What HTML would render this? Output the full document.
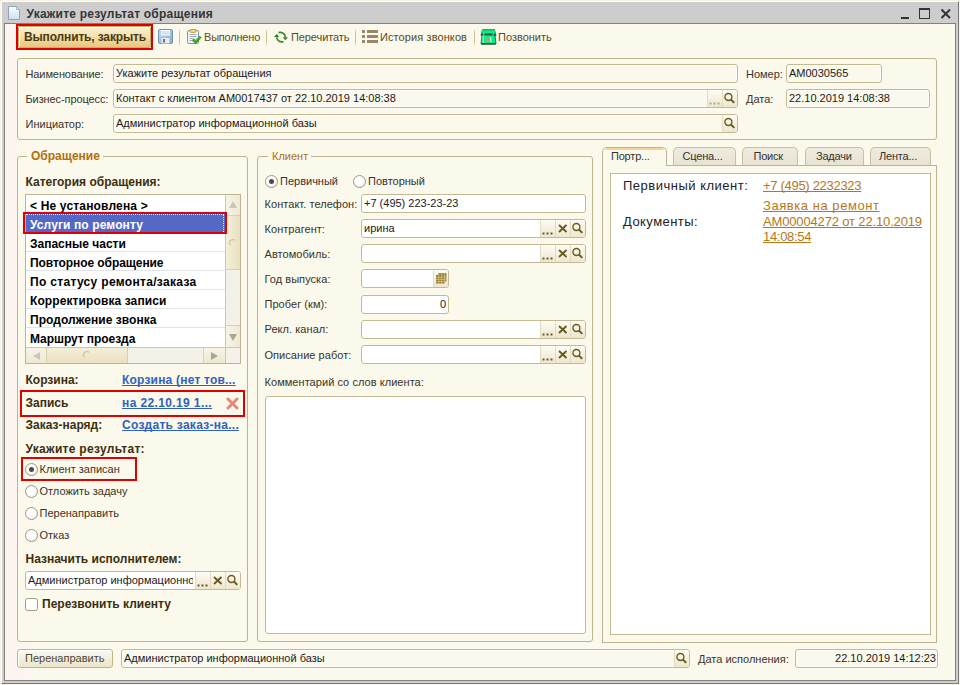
<!DOCTYPE html><html><head><meta charset="utf-8"><style>
*{margin:0;padding:0;box-sizing:border-box}
html,body{width:960px;height:685px;overflow:hidden;background:#f6f3e2;font-family:"Liberation Sans",sans-serif;}
.a{position:absolute;text-decoration-skip-ink:none}
.t11{font-size:11px;line-height:13px;color:#2b2b2b;white-space:nowrap}
.b12{font-size:12px;line-height:14px;font-weight:bold;color:#3a2f10;white-space:nowrap}
.b11{font-size:11px;line-height:13px;font-weight:bold;color:#222;white-space:nowrap}
.t13{font-size:13px;line-height:15px;color:#222;white-space:nowrap}
.tt{font-size:11px;line-height:13px;color:#5a4a20;white-space:nowrap}
.grp{border:1px solid #bdb591;border-radius:3px;}
.gtitle{height:14px;background:#fbf9ec;font-size:11px;line-height:14px;color:#b0700e;padding-left:4px;white-space:nowrap}
.gb{font-weight:bold}
.fld{border:1px solid #c3ba94;border-radius:3px;background:#fff;overflow:hidden}
.fld.ro{background:#fbf9ec;box-shadow:inset 1px 1px 0 #fff, inset -1px -1px 0 #fff}
.ft{position:absolute;top:2px;font-size:11px;line-height:13px;color:#1a1a1a;white-space:nowrap;overflow:hidden}
.fb{position:absolute;top:0;width:16px;height:17px;border-left:1px solid #e2dbc0;background:linear-gradient(#fdfcf5,#ede7cf)}
.ic{position:absolute;left:0;top:0}
.sep{position:absolute;width:1px;background:linear-gradient(#fbf9ec,#c9bd92 30%,#c9bd92 70%,#fbf9ec)}
.lnk{color:#2f62c0;text-decoration:underline}
.rb{position:absolute;width:13px;height:13px;border-radius:50%;border:1px solid #9c987e;background:radial-gradient(circle at 40% 40%,#fff 40%,#e9e7df)}
.rd{position:absolute;left:3px;top:3px;width:5px;height:5px;border-radius:50%;background:#4a4a55}
.red{border:2px solid #e00000}
</style></head><body>
<div class="a " style="left:1px;top:1px;width:958px;height:683px;background:#cdcdcd;border-top:1px solid #fff;border-left:1px solid #fff;border-right:1px solid #7a7a7a;border-bottom:1px solid #7a7a7a;"></div>
<div class="a " style="left:4px;top:23px;width:952px;height:658px;background:#fbf9ec;border:1px solid #808080;"></div>
<div class="a " style="left:5px;top:24px;width:12px;height:656px;background:#fdf5ef;"></div>
<div class="a " style="left:17px;top:642px;width:14px;height:38px;background:#fdf5ef;"></div>
<svg class="a" style="left:7px;top:5px" width="14" height="16"><defs><linearGradient id="dg" x1="0" y1="0" x2="0" y2="1"><stop offset="0" stop-color="#fafcff"/><stop offset="1" stop-color="#cfe0f2"/></linearGradient></defs><path d="M1.5 1.5 H9.5 L12.5 4.5 V14.5 H1.5 Z" fill="url(#dg)" stroke="#8fa3bb" stroke-width="1"/><path d="M9.5 1.5 V4.5 H12.5" fill="#d8e6f3" stroke="#9fb3c9" stroke-width="1"/></svg>
<div class="a b12" style="left:26.5px;top:7px;color:#353535;letter-spacing:0.22px;">Укажите результат обращения</div>
<div class="a " style="left:901px;top:17px;width:8px;height:2px;background:#333;"></div>
<div class="a " style="left:919px;top:8px;width:11px;height:11px;border:1px solid #333;border-top:2px solid #333;"></div>
<svg class="a" style="left:940px;top:8px" width="12" height="12"><path d="M1.5 1.5 L10 10 M10 1.5 L1.5 10" stroke="#333" stroke-width="2"/></svg>
<div class="a red" style="left:16px;top:24px;width:137px;height:26px;"></div>
<div class="a " style="left:18px;top:26px;width:133px;height:22px;border:1px solid #c9ae6a;border-radius:2px;background:linear-gradient(#fbf3d8,#f1dca4 55%,#e6c77e);box-shadow:inset 1px 1px 0 #fffbea;"></div>
<div class="a b12" style="left:24px;top:30px;color:#4b3a10;letter-spacing:-0.15px;">Выполнить, закрыть</div>
<svg class="a" style="left:158px;top:29px" width="16" height="16"><defs><linearGradient id="sg" x1="0" y1="0" x2="1" y2="1"><stop offset="0" stop-color="#c2dcf2"/><stop offset="1" stop-color="#86aad0"/></linearGradient></defs><rect x="0.5" y="0.5" width="14" height="14" rx="1.5" fill="url(#sg)" stroke="#7592b2"/><rect x="3" y="1" width="9" height="5.5" fill="#f6fafd"/><rect x="3.5" y="2.5" width="8" height="0.9" fill="#b6d0e6"/><rect x="3.5" y="4.3" width="8" height="0.9" fill="#b6d0e6"/><rect x="3.5" y="9" width="8" height="5.5" fill="#e9ecef"/><rect x="5" y="10" width="2" height="3.5" fill="#5f7892"/></svg>
<div class="sep" style="left:179px;top:28px;height:19px"></div>
<svg class="a" style="left:187px;top:29px" width="16" height="16"><rect x="0.5" y="1.5" width="11" height="13" rx="1.5" fill="#f3f6f9" stroke="#8592a0"/><rect x="3" y="0.5" width="6" height="2.8" rx="1" fill="#f7e08a" stroke="#c4952e"/><path d="M2.5 5.5 H9.5 M2.5 7.5 H9.5 M2.5 9.5 H5.5 M2.5 11.5 H5" stroke="#9aa6b2" stroke-width="0.9"/><path d="M5.8 10.2 L8.6 13 L13.6 7.6" fill="none" stroke="#2e9a22" stroke-width="2.8" stroke-linejoin="round"/><path d="M6.4 10.2 L8.6 12.2 L13 7.6" fill="none" stroke="#6cc84a" stroke-width="1"/></svg>
<div class="a tt" style="left:204px;top:31px;letter-spacing:-0.2px;">Выполнено</div>
<div class="sep" style="left:266px;top:28px;height:19px"></div>
<svg class="a" style="left:273px;top:30px" width="16" height="14"><path d="M5.5 2.6 C9 1.8 12 3.5 12.3 7" fill="none" stroke="#3c8a2c" stroke-width="1.7"/><path d="M9.7 7.2 H15 L12.3 10.2 Z" fill="#2f7e22"/><path d="M10.5 11.6 C7 12.4 4 10.8 3.7 7.3" fill="none" stroke="#3c8a2c" stroke-width="1.7"/><path d="M1 7 H6.3 L3.7 4 Z" fill="#2f7e22"/></svg>
<div class="a tt" style="left:291px;top:31px;letter-spacing:-0.1px;">Перечитать</div>
<div class="sep" style="left:355px;top:28px;height:19px"></div>
<svg class="a" style="left:362px;top:30px" width="17" height="14"><g fill="#9c8668"><rect x="0" y="0" width="3" height="3"/><rect x="5" y="0" width="11" height="3"/><rect x="0" y="5" width="3" height="3"/><rect x="5" y="5" width="11" height="3"/><rect x="0" y="10" width="3" height="3"/><rect x="5" y="10" width="11" height="3"/></g></svg>
<div class="a tt" style="left:380px;top:31px;letter-spacing:0.1px;">История звонков</div>
<div class="sep" style="left:474px;top:28px;height:19px"></div>
<svg class="a" style="left:480px;top:29px" width="17" height="16"><path d="M2.5 0.5 H14.5 L15.5 4 H1.5 Z" fill="#14d070" stroke="#1a9a3a" stroke-width="0.8"/><rect x="2" y="2" width="13" height="3" fill="#00ee90"/><path d="M0.8 4.5 L3 4 V7.5 L0.8 7 Z M16.2 4.5 L14 4 V7.5 L16.2 7 Z" fill="#1e6a3a"/><rect x="4.5" y="4.6" width="8" height="1.3" fill="#0a3a20"/><path d="M2 6 H15 L16 15 H1 Z" fill="#00f08e" stroke="#0b5a30" stroke-width="0.8"/><rect x="1.5" y="14.2" width="14" height="1.3" fill="#0b4a28"/><rect x="2.4" y="6.5" width="1.6" height="7.5" fill="#8ee8b0"/><rect x="5.5" y="8" width="5" height="2" fill="#98b070"/><rect x="5.5" y="11" width="5" height="2" fill="#98b070"/><rect x="10.3" y="8" width="1" height="5" fill="#e8f8e0"/></svg>
<div class="a tt" style="left:498px;top:31px;letter-spacing:0px;">Позвонить</div>
<div class="a grp" style="left:17px;top:58px;width:920px;height:82px;"></div>
<div class="a t11" style="left:25.5px;top:68px;color:#38342a;letter-spacing:-0.1px;">Наименование:</div>
<div class="a t11" style="left:25.5px;top:93px;color:#38342a;letter-spacing:-0.1px;">Бизнес-процесс:</div>
<div class="a t11" style="left:25.5px;top:118px;color:#38342a;">Инициатор:</div>
<div class="a fld ro" style="left:113px;top:64px;width:625px;height:19px;"><div class="ft" style="left:2px;width:619px;">Укажите результат обращения</div></div>
<div class="a fld ro" style="left:113px;top:89px;width:625px;height:19px;"><div class="ft" style="left:2px;width:589px;">Контакт с клиентом АМ0017437 от 22.10.2019 14:08:38</div><div class="fb" style="left:593px;"><svg width="15" height="17" class="ic"><rect x="1.5" y="12.5" width="2" height="2" fill="#b0a888"/><rect x="5.5" y="12.5" width="2" height="2" fill="#b0a888"/><rect x="9.5" y="12.5" width="2" height="2" fill="#b0a888"/></svg></div><div class="fb" style="left:608px;"><svg width="15" height="17" class="ic"><circle cx="5.4" cy="7" r="3.5" fill="none" stroke="#6b5a1e" stroke-width="1.4"/><path d="M7.9 9.5 L11.3 12.9" stroke="#6b5a1e" stroke-width="2"/></svg></div></div>
<div class="a fld ro" style="left:113px;top:114px;width:625px;height:19px;"><div class="ft" style="left:2px;width:604px;">Администратор информационной базы</div><div class="fb" style="left:608px;"><svg width="15" height="17" class="ic"><circle cx="5.4" cy="7" r="3.5" fill="none" stroke="#6b5a1e" stroke-width="1.4"/><path d="M7.9 9.5 L11.3 12.9" stroke="#6b5a1e" stroke-width="2"/></svg></div></div>
<div class="a t11" style="left:746px;top:68px;color:#38342a;">Номер:</div>
<div class="a t11" style="left:746px;top:93px;color:#38342a;">Дата:</div>
<div class="a fld ro" style="left:786px;top:64px;width:96px;height:19px;"><div class="ft" style="left:2px;width:90px;">АМ0030565</div></div>
<div class="a fld ro" style="left:786px;top:89px;width:144px;height:19px;"><div class="ft" style="left:2px;width:138px;">22.10.2019 14:08:38</div></div>
<div class="a grp" style="left:17px;top:156px;width:231px;height:486px;"></div>
<div class="a gtitle gb" style="left:27px;top:149px;width:76px;font-size:12px;">Обращение</div>
<div class="a b12" style="left:25.5px;top:175px;letter-spacing:0px;">Категория обращения:</div>
<div class="a " style="left:25px;top:194px;width:216px;height:170px;border:1px solid #bdb591;background:#fff;"></div>
<div class="a b12" style="left:30px;top:199px;color:#000;letter-spacing:0.17px;">&lt; Не установлена &gt;</div>
<div class="a " style="left:26px;top:213px;width:199px;height:1px;background:#dfe4ea;"></div>
<div class="a " style="left:26px;top:214px;width:199px;height:19px;background:#5468c6;"></div>
<div class="a b12" style="left:30px;top:218px;color:#fff;letter-spacing:0.11px;">Услуги по ремонту</div>
<div class="a " style="left:26px;top:232px;width:199px;height:1px;background:#dfe4ea;"></div>
<div class="a b12" style="left:30px;top:237px;color:#000;letter-spacing:0px;">Запасные части</div>
<div class="a " style="left:26px;top:251px;width:199px;height:1px;background:#dfe4ea;"></div>
<div class="a b12" style="left:30px;top:256px;color:#000;letter-spacing:-0.08px;">Повторное обращение</div>
<div class="a " style="left:26px;top:270px;width:199px;height:1px;background:#dfe4ea;"></div>
<div class="a b12" style="left:30px;top:275px;color:#000;letter-spacing:0.32px;">По статусу ремонта/заказа</div>
<div class="a " style="left:26px;top:289px;width:199px;height:1px;background:#dfe4ea;"></div>
<div class="a b12" style="left:30px;top:294px;color:#000;letter-spacing:0.1px;">Корректировка записи</div>
<div class="a " style="left:26px;top:308px;width:199px;height:1px;background:#dfe4ea;"></div>
<div class="a b12" style="left:30px;top:313px;color:#000;letter-spacing:0.06px;">Продолжение звонка</div>
<div class="a " style="left:26px;top:327px;width:199px;height:1px;background:#dfe4ea;"></div>
<div class="a b12" style="left:30px;top:332px;color:#000;letter-spacing:-0.06px;">Маршрут проезда</div>
<div class="a " style="left:225px;top:195px;width:15px;height:152px;background:#f3f1e8;border-left:1px solid #cfc7a6;"></div>
<div class="a " style="left:225px;top:195px;width:15px;height:21px;background:linear-gradient(90deg,#f7f4e6,#efe9d2);border-left:1px solid #cfc7a6;border-bottom:1px solid #d8d0b0;"></div>
<svg class="a" style="left:228px;top:200px" width="10" height="9"><path d="M5 1 L9 8 H1 Z" fill="#c8c6b8"/></svg>
<div class="a " style="left:225px;top:216px;width:15px;height:54px;background:linear-gradient(90deg,#f4efd8,#e9e1bf);border-left:1px solid #cfc7a6;border-bottom:1px solid #d8d0b0;"></div>
<svg class="a" style="left:229px;top:239px" width="8" height="8"><path d="M1.5 6 A3 3 0 0 1 6 1.5" fill="none" stroke="#d0c8a8" stroke-width="1.4"/></svg>
<div class="a " style="left:225px;top:325px;width:15px;height:22px;background:linear-gradient(90deg,#f7f4e6,#efe9d2);border-left:1px solid #cfc7a6;border-top:1px solid #d8d0b0;"></div>
<svg class="a" style="left:228px;top:333px" width="10" height="9"><path d="M1 1 H9 L5 8 Z" fill="#a8a698"/></svg>
<div class="a " style="left:26px;top:347px;width:199px;height:16px;background:#f3f1e8;border-top:1px solid #cfc7a6;"></div>
<div class="a " style="left:26px;top:347px;width:21px;height:16px;background:linear-gradient(#f7f4e6,#efe9d2);border-top:1px solid #cfc7a6;border-right:1px solid #d8d0b0;"></div>
<svg class="a" style="left:32px;top:351px" width="9" height="10"><path d="M1 5 L8 1 V9 Z" fill="#c8c6b8"/></svg>
<div class="a " style="left:47px;top:347px;width:81px;height:16px;background:linear-gradient(#f4efd8,#e9e1bf);border-top:1px solid #cfc7a6;border-right:1px solid #d8d0b0;"></div>
<svg class="a" style="left:83px;top:351px" width="8" height="8"><path d="M1.5 6 A3 3 0 0 1 6 1.5" fill="none" stroke="#d0c8a8" stroke-width="1.4"/></svg>
<div class="a " style="left:203px;top:347px;width:22px;height:16px;background:linear-gradient(#f7f4e6,#efe9d2);border-top:1px solid #cfc7a6;border-left:1px solid #d8d0b0;"></div>
<svg class="a" style="left:210px;top:351px" width="9" height="10"><path d="M1 1 L8 5 L1 9 Z" fill="#a8a698"/></svg>
<div class="a " style="left:225px;top:347px;width:15px;height:16px;background:#f3f1e8;border-top:1px solid #cfc7a6;border-left:1px solid #cfc7a6;"></div>
<div class="a " style="left:26px;top:214px;width:198px;height:18px;border:1px dotted #dfe6ff;border-left:none;border-bottom:none;"></div>
<div class="a red" style="left:23px;top:212px;width:204px;height:22px;"></div>
<div class="a b12" style="left:25.5px;top:373px;">Корзина:</div>
<div class="a b12" style="left:122px;top:373px;color:#2f62c0;letter-spacing:0.2px;"><span class="lnk">Корзина (нет тов...</span></div>
<div class="a red" style="left:20px;top:390px;width:225px;height:27px;"></div>
<div class="a b12" style="left:25.5px;top:396px;">Запись</div>
<div class="a b12" style="left:122px;top:396px;color:#2f62c0;letter-spacing:0.38px;"><span class="lnk">на 22.10.19 1...</span></div>
<svg class="a" style="left:226px;top:397px" width="13" height="13"><path d="M2 2 L11 11 M11 2 L2 11" stroke="#e8857c" stroke-width="3" stroke-linecap="round"/></svg>
<div class="a b12" style="left:25.5px;top:418px;">Заказ-наряд:</div>
<div class="a b12" style="left:122px;top:418px;color:#2f62c0;letter-spacing:0.27px;"><span class="lnk">Создать заказ-на...</span></div>
<div class="a b12" style="left:25.5px;top:442px;letter-spacing:0.3px;">Укажите результат:</div>
<div class="rb" style="left:25px;top:463px"><div class=rd></div></div>
<div class="a t11" style="left:39.5px;top:463px;color:#38342a;">Клиент записан</div>
<div class="rb" style="left:25px;top:485px"></div>
<div class="a t11" style="left:39.5px;top:485px;color:#38342a;">Отложить задачу</div>
<div class="rb" style="left:25px;top:507px"></div>
<div class="a t11" style="left:39.5px;top:507px;color:#38342a;">Перенаправить</div>
<div class="rb" style="left:25px;top:529px"></div>
<div class="a t11" style="left:39.5px;top:529px;color:#38342a;">Отказ</div>
<div class="a red" style="left:21px;top:457px;width:116px;height:24px;"></div>
<div class="a b12" style="left:25.5px;top:552px;">Назначить исполнителем:</div>
<div class="a fld" style="left:25px;top:571px;width:216px;height:19px;"><div class="ft" style="left:2px;width:165px;">Администратор информационной базы</div><div class="fb" style="left:169px;"><svg width="15" height="17" class="ic"><rect x="1.5" y="12.5" width="2" height="2" fill="#6b5a1e"/><rect x="5.5" y="12.5" width="2" height="2" fill="#6b5a1e"/><rect x="9.5" y="12.5" width="2" height="2" fill="#6b5a1e"/></svg></div><div class="fb" style="left:184px;"><svg width="15" height="17" class="ic"><path d="M3 5 L10.5 12 M10.5 5 L3 12" stroke="#6b5a1e" stroke-width="1.9"/></svg></div><div class="fb" style="left:199px;"><svg width="15" height="17" class="ic"><circle cx="5.4" cy="7" r="3.5" fill="none" stroke="#6b5a1e" stroke-width="1.4"/><path d="M7.9 9.5 L11.3 12.9" stroke="#6b5a1e" stroke-width="2"/></svg></div></div>
<div class="a " style="left:25px;top:598px;width:13px;height:13px;border:1px solid #a39c7e;border-radius:2.5px;background:#fff;"></div>
<div class="a b12" style="left:42px;top:597px;">Перезвонить клиенту</div>
<div class="a grp" style="left:257px;top:156px;width:336px;height:486px;"></div>
<div class="a gtitle" style="left:268px;top:149px;width:43px;">Клиент</div>
<div class="rb" style="left:265px;top:175px"><div class="rd"></div></div>
<div class="a t11" style="left:280px;top:175px;color:#333;">Первичный</div>
<div class="rb" style="left:353px;top:175px"></div>
<div class="a t11" style="left:368px;top:175px;color:#333;">Повторный</div>
<div class="a t11" style="left:264.5px;top:198px;color:#38342a;letter-spacing:0.05px;">Контакт. телефон:</div>
<div class="a t11" style="left:264.5px;top:223px;color:#38342a;letter-spacing:0.05px;">Контрагент:</div>
<div class="a t11" style="left:264.5px;top:248px;color:#38342a;letter-spacing:0.05px;">Автомобиль:</div>
<div class="a t11" style="left:264.5px;top:273px;color:#38342a;letter-spacing:0.05px;">Год выпуска:</div>
<div class="a t11" style="left:264.5px;top:298px;color:#38342a;letter-spacing:0.05px;">Пробег (км):</div>
<div class="a t11" style="left:264.5px;top:323px;color:#38342a;letter-spacing:0.05px;">Рекл. канал:</div>
<div class="a t11" style="left:264.5px;top:349px;color:#38342a;letter-spacing:0.05px;">Описание работ:</div>
<div class="a t11" style="left:264.5px;top:376px;color:#38342a;letter-spacing:0.05px;">Комментарий со слов клиента:</div>
<div class="a fld" style="left:361px;top:194px;width:225px;height:19px;"><div class="ft" style="left:2px;width:219px;">+7 (495) 223-23-23</div></div>
<div class="a fld" style="left:361px;top:219px;width:225px;height:19px;"><div class="ft" style="left:2px;width:174px;">ирина</div><div class="fb" style="left:178px;"><svg width="15" height="17" class="ic"><rect x="1.5" y="12.5" width="2" height="2" fill="#6b5a1e"/><rect x="5.5" y="12.5" width="2" height="2" fill="#6b5a1e"/><rect x="9.5" y="12.5" width="2" height="2" fill="#6b5a1e"/></svg></div><div class="fb" style="left:193px;"><svg width="15" height="17" class="ic"><path d="M3 5 L10.5 12 M10.5 5 L3 12" stroke="#6b5a1e" stroke-width="1.9"/></svg></div><div class="fb" style="left:208px;"><svg width="15" height="17" class="ic"><circle cx="5.4" cy="7" r="3.5" fill="none" stroke="#6b5a1e" stroke-width="1.4"/><path d="M7.9 9.5 L11.3 12.9" stroke="#6b5a1e" stroke-width="2"/></svg></div></div>
<div class="a fld" style="left:361px;top:244px;width:225px;height:19px;"><div class="ft" style="left:2px;width:174px;"></div><div class="fb" style="left:178px;"><svg width="15" height="17" class="ic"><rect x="1.5" y="12.5" width="2" height="2" fill="#6b5a1e"/><rect x="5.5" y="12.5" width="2" height="2" fill="#6b5a1e"/><rect x="9.5" y="12.5" width="2" height="2" fill="#6b5a1e"/></svg></div><div class="fb" style="left:193px;"><svg width="15" height="17" class="ic"><path d="M3 5 L10.5 12 M10.5 5 L3 12" stroke="#6b5a1e" stroke-width="1.9"/></svg></div><div class="fb" style="left:208px;"><svg width="15" height="17" class="ic"><circle cx="5.4" cy="7" r="3.5" fill="none" stroke="#6b5a1e" stroke-width="1.4"/><path d="M7.9 9.5 L11.3 12.9" stroke="#6b5a1e" stroke-width="2"/></svg></div></div>
<div class="a fld" style="left:361px;top:269px;width:88px;height:19px;"><div class="ft" style="left:2px;width:67px;"></div><div class="fb" style="left:71px;"><svg width="15" height="17" class="ic"><rect x="4" y="3" width="8.5" height="8.5" fill="#a08838"/><rect x="2" y="5" width="8.5" height="8.5" fill="#9a8030"/><path d="M2 7.2 H12.5 M2 9.4 H12.5 M2 11.6 H10.5 M4.8 3 V13.5 M7.6 3 V13.5 M10.4 3 V11.5" stroke="#d8cc98" stroke-width="0.7"/></svg></div></div>
<div class="a fld" style="left:361px;top:295px;width:88px;height:19px;"><div class="ft" style="left:2px;width:82px;text-align:right;">0</div></div>
<div class="a fld" style="left:361px;top:320px;width:225px;height:19px;"><div class="ft" style="left:2px;width:174px;"></div><div class="fb" style="left:178px;"><svg width="15" height="17" class="ic"><rect x="1.5" y="12.5" width="2" height="2" fill="#6b5a1e"/><rect x="5.5" y="12.5" width="2" height="2" fill="#6b5a1e"/><rect x="9.5" y="12.5" width="2" height="2" fill="#6b5a1e"/></svg></div><div class="fb" style="left:193px;"><svg width="15" height="17" class="ic"><path d="M3 5 L10.5 12 M10.5 5 L3 12" stroke="#6b5a1e" stroke-width="1.9"/></svg></div><div class="fb" style="left:208px;"><svg width="15" height="17" class="ic"><circle cx="5.4" cy="7" r="3.5" fill="none" stroke="#6b5a1e" stroke-width="1.4"/><path d="M7.9 9.5 L11.3 12.9" stroke="#6b5a1e" stroke-width="2"/></svg></div></div>
<div class="a fld" style="left:361px;top:345px;width:225px;height:19px;"><div class="ft" style="left:2px;width:174px;"></div><div class="fb" style="left:178px;"><svg width="15" height="17" class="ic"><rect x="1.5" y="12.5" width="2" height="2" fill="#6b5a1e"/><rect x="5.5" y="12.5" width="2" height="2" fill="#6b5a1e"/><rect x="9.5" y="12.5" width="2" height="2" fill="#6b5a1e"/></svg></div><div class="fb" style="left:193px;"><svg width="15" height="17" class="ic"><path d="M3 5 L10.5 12 M10.5 5 L3 12" stroke="#6b5a1e" stroke-width="1.9"/></svg></div><div class="fb" style="left:208px;"><svg width="15" height="17" class="ic"><circle cx="5.4" cy="7" r="3.5" fill="none" stroke="#6b5a1e" stroke-width="1.4"/><path d="M7.9 9.5 L11.3 12.9" stroke="#6b5a1e" stroke-width="2"/></svg></div></div>
<div class="a " style="left:265px;top:396px;width:321px;height:238px;border:1px solid #c3ba94;border-radius:3px;background:#fff;"></div>
<div class="a " style="left:602px;top:165px;width:335px;height:478px;border:1px solid #bdb591;background:#fbf9ec;"></div>
<div class="a " style="left:602px;top:147px;width:65px;height:19px;border:1px solid #bdb591;border-bottom:none;border-radius:5px 5px 0 0;background:#fbf9ec;"></div>
<div class="a " style="left:605px;top:148px;width:59px;height:2px;background:#f6d596;border-radius:2px 2px 0 0;"></div>
<div class="a t11" style="left:611px;top:150px;color:#333;letter-spacing:-0.2px;">Портр...</div>
<div class="a " style="left:673px;top:147px;width:63px;height:18px;border:1px solid #c8c0a0;border-bottom:none;border-radius:5px 5px 0 0;background:linear-gradient(#eeebde,#e8e4d4);"></div>
<div class="a t11" style="left:682.5px;top:150px;color:#333;letter-spacing:-0.2px;">Сцена...</div>
<div class="a " style="left:742px;top:147px;width:56px;height:18px;border:1px solid #c8c0a0;border-bottom:none;border-radius:5px 5px 0 0;background:linear-gradient(#eeebde,#e8e4d4);"></div>
<div class="a t11" style="left:753.5px;top:150px;color:#333;letter-spacing:-0.2px;">Поиск</div>
<div class="a " style="left:805px;top:147px;width:59px;height:18px;border:1px solid #c8c0a0;border-bottom:none;border-radius:5px 5px 0 0;background:linear-gradient(#eeebde,#e8e4d4);"></div>
<div class="a t11" style="left:816px;top:150px;color:#333;letter-spacing:-0.2px;">Задачи</div>
<div class="a " style="left:870px;top:147px;width:61px;height:18px;border:1px solid #c8c0a0;border-bottom:none;border-radius:5px 5px 0 0;background:linear-gradient(#eeebde,#e8e4d4);"></div>
<div class="a t11" style="left:879px;top:150px;color:#333;letter-spacing:-0.2px;">Лента...</div>
<div class="a " style="left:610px;top:173px;width:321px;height:462px;border:1px solid #c3ba94;background:#fff;"></div>
<div class="a t13" style="left:623px;top:178px;letter-spacing:0.5px;">Первичный клиент:</div>
<div class="a t13" style="left:623px;top:214px;letter-spacing:0.45px;">Документы:</div>
<div class="a t13" style="left:763px;top:178px;color:#b57818;text-decoration:underline;letter-spacing:-0.3px;">+7 (495) 2232323</div>
<div class="a t13" style="left:763px;top:198px;color:#b57818;text-decoration:underline;letter-spacing:0.55px;">Заявка на ремонт</div>
<div class="a t13" style="left:763px;top:214px;color:#b57818;text-decoration:underline;letter-spacing:-0.15px;">АМ00004272 от 22.10.2019</div>
<div class="a t13" style="left:763px;top:229px;color:#b57818;text-decoration:underline;letter-spacing:-0.3px;">14:08:54</div>
<div class="a " style="left:17px;top:649px;width:96px;height:19px;border:1px solid #bfb48c;border-radius:3px;background:linear-gradient(#fbfaf2,#ebe5cb);box-shadow:inset 0 1px 0 #fff, inset 1px 0 0 #fff;"></div>
<div class="a tt" style="left:25px;top:652px;color:#4e4630;">Перенаправить</div>
<div class="a fld ro" style="left:121px;top:649px;width:569px;height:19px;"><div class="ft" style="left:2px;width:548px;">Администратор информационной базы</div><div class="fb" style="left:552px;"><svg width="15" height="17" class="ic"><circle cx="5.4" cy="7" r="3.5" fill="none" stroke="#6b5a1e" stroke-width="1.4"/><path d="M7.9 9.5 L11.3 12.9" stroke="#6b5a1e" stroke-width="2"/></svg></div></div>
<div class="a t11" style="left:698px;top:653px;color:#38342a;">Дата исполнения:</div>
<div class="a fld ro" style="left:795px;top:649px;width:143px;height:19px;"><div class="ft" style="left:2px;width:137px;text-align:right;margin-left:1px;">22.10.2019 14:12:23</div></div>
</body></html>
